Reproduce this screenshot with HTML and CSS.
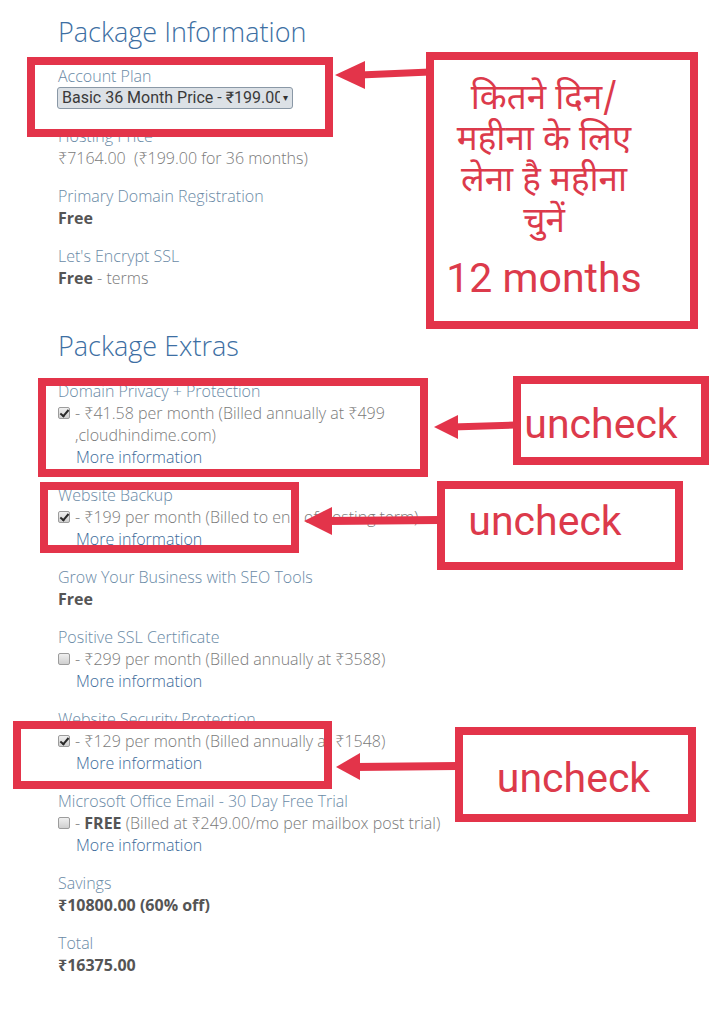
FILE: index.html
```html
<!DOCTYPE html>
<html lang="en">
<head>
<meta charset="utf-8">
<title>Package Information</title>
<link rel="stylesheet" href="styles.css">
</head>
<body>
<div class="page">
  <main class="content">
    <h2 class="heading">Package Information</h2>
    <div class="group">
      <div class="label">Account Plan</div>
      <div class="select"><span class="select-text">Basic 36 Month Price - ₹199.00 / month</span><span class="select-arrow">▾</span></div>
    </div>
    <div class="group">
      <div class="label">Hosting Price</div>
      <div class="value">₹7164.00&nbsp; (₹199.00 for 36 months)</div>
    </div>
    <div class="group">
      <div class="label">Primary Domain Registration</div>
      <div class="value"><b>Free</b></div>
    </div>
    <div class="group">
      <div class="label">Let's Encrypt SSL</div>
      <div class="value"><b>Free</b> - terms</div>
    </div>

    <h2 class="heading heading-extras">Package Extras</h2>
    <div class="group">
      <div class="label">Domain Privacy + Protection</div>
      <div class="option"><span class="cb checked"></span><span class="opt-text">- ₹41.58 per month (Billed annually at ₹499<br>,cloudhindime.com)<br><a class="link">More information</a></span></div>
    </div>
    <div class="group">
      <div class="label">Website Backup</div>
      <div class="option"><span class="cb checked"></span><span class="opt-text">- ₹199 per month (Billed to end of hosting term)<br><a class="link">More information</a></span></div>
    </div>
    <div class="group">
      <div class="label">Grow Your Business with SEO Tools</div>
      <div class="value"><b>Free</b></div>
    </div>
    <div class="group">
      <div class="label">Positive SSL Certificate</div>
      <div class="option"><span class="cb"></span><span class="opt-text">- ₹299 per month (Billed annually at ₹3588)<br><a class="link">More information</a></span></div>
    </div>
    <div class="group">
      <div class="label">Website Security Protection</div>
      <div class="option"><span class="cb checked"></span><span class="opt-text">- ₹129 per month (Billed annually at ₹1548)<br><a class="link">More information</a></span></div>
    </div>
    <div class="group">
      <div class="label">Microsoft Office Email - 30 Day Free Trial</div>
      <div class="option"><span class="cb"></span><span class="opt-text">- <b>FREE</b> (Billed at ₹249.00/mo per mailbox post trial)<br><a class="link">More information</a></span></div>
    </div>
    <div class="group">
      <div class="label">Savings</div>
      <div class="value"><b>₹10800.00 (60% off)</b></div>
    </div>
    <div class="group">
      <div class="label">Total</div>
      <div class="value"><b>₹16375.00</b></div>
    </div>
  </main>

  <div class="mark mark-plan"></div>
  <div class="mark mark-privacy"></div>
  <div class="mark mark-backup"></div>
  <div class="mark mark-security"></div>

  <div class="callout callout-plan">
    <div class="hi">कितने दिन/</div>
    <div class="hi">महीना के लिए</div>
    <div class="hi">लेना है महीना</div>
    <div class="hi">चुनें</div>
    <div class="en">12 months</div>
  </div>
  <div class="callout callout-a"><span class="unc">uncheck</span></div>
  <div class="callout callout-b"><span class="unc">uncheck</span></div>
  <div class="callout callout-c"><span class="unc">uncheck</span></div>

  <svg class="arrows" width="719" height="1010" viewBox="0 0 719 1010">
    <g fill="#e3344a" stroke="#e3344a">
      <line x1="360" y1="75" x2="430" y2="72" stroke-width="7"/>
      <polygon points="335,75 365,61 365,89" stroke="none"/>
      <line x1="452" y1="427" x2="515" y2="425" stroke-width="7"/>
      <polygon points="434,427 458,415 458,439" stroke="none"/>
      <line x1="328" y1="521" x2="439" y2="520" stroke-width="8"/>
      <polygon points="304,521 332,507 332,535" stroke="none"/>
      <line x1="355" y1="767" x2="457" y2="766" stroke-width="8"/>
      <polygon points="336,767 360,753 360,780" stroke="none"/>
    </g>
  </svg>
</div>
</body>
</html>
```
FILE: styles.css
```css
html, body {
  margin: 0;
  padding: 0;
  background: #ffffff;
}

.page {
  position: relative;
  width: 719px;
  min-height: 1010px;
  overflow: hidden;
}

.content {
  padding: 14px 0 0 58px;
  font-family: "Open Sans", "Noto Sans", sans-serif;
  font-weight: 300;
  font-size: 16px;
  line-height: 22px;
  color: #7a7a7a;
}

.heading {
  margin: 0 0 15px 0;
  font-family: "Open Sans", sans-serif;
  font-weight: 300;
  font-size: 27px;
  line-height: 36px;
  color: #3d6fa3;
}

.heading-extras {
  margin-top: 39px;
  margin-bottom: 16px;
}

.group {
  margin-bottom: 16px;
}

.label {
  color: #6a8aa6;
}

.value b,
.opt-text b {
  font-weight: 700;
  color: #555555;
}

.select {
  display: flex;
  align-items: center;
  box-sizing: border-box;
  width: 236px;
  height: 22px;
  margin-left: -1px;
  padding: 0 4px 0 4px;
  border: 1px solid #8a98a6;
  border-radius: 3px;
  background: #dce1e6;
  font-family: Roboto, "Noto Sans", sans-serif;
  font-weight: 400;
  font-size: 16px;
  color: #3a3a3a;
}

.select-text {
  flex: 1;
  white-space: nowrap;
  overflow: hidden;
}

.select-arrow {
  font-size: 10px;
  line-height: 10px;
  margin-left: 3px;
  color: #333;
}

.option {
  display: flex;
  align-items: flex-start;
}

.cb {
  flex: none;
  box-sizing: border-box;
  width: 12px;
  height: 12px;
  margin: 5px 5px 0 0;
  border: 1px solid #9c9c9c;
  border-radius: 2px;
  background: linear-gradient(#f0f0f0, #cfcfcf);
  position: relative;
}

.cb.checked::after {
  content: "";
  position: absolute;
  left: 3px;
  top: 0px;
  width: 3px;
  height: 7px;
  border: solid #2a2a2a;
  border-width: 0 2px 2px 0;
  transform: rotate(40deg);
}

.opt-text {
  display: block;
}

.link {
  display: inline-block;
  margin-left: 1px;
  color: #3b6a9a;
  text-decoration: none;
}

/* annotation overlay */
.mark {
  position: absolute;
  box-sizing: border-box;
  border: 8px solid #e3344a;
}

.mark-plan { left: 27px; top: 57px; width: 306px; height: 80px; }
.mark-privacy { left: 38px; top: 378px; width: 390px; height: 99px; }
.mark-backup { left: 40px; top: 482px; width: 259px; height: 71px; }
.mark-security { left: 13px; top: 721px; width: 319px; height: 68px; }

.callout {
  position: absolute;
  box-sizing: border-box;
  border: 8px solid #e3344a;
  background: #ffffff;
  color: #dc3a4b;
  font-family: Roboto, "Noto Sans", sans-serif;
  display: flex;
  flex-direction: column;
  align-items: center;
  justify-content: center;
}

.callout-plan {
  left: 426px;
  top: 52px;
  width: 272px;
  height: 277px;
  justify-content: flex-start;
  padding-top: 20px;
  padding-right: 36px;
}

.hi {
  font-family: "Noto Sans Devanagari", "Lohit Devanagari", "Noto Sans", sans-serif;
  font-size: 35px;
  line-height: 41px;
  white-space: nowrap;
}

.en {
  margin-top: 10px;
  font-size: 41px;
  line-height: 48px;
}

.unc {
  font-size: 41px;
  line-height: 48px;
}

.callout-a { left: 513px; top: 376px; width: 196px; height: 89px; padding: 6px 20px 0 0; }
.callout-b { left: 437px; top: 481px; width: 246px; height: 89px; padding: 0 30px 10px 0; }
.callout-c { left: 455px; top: 727px; width: 241px; height: 95px; padding: 6px 4px 0 0; }

.arrows {
  position: absolute;
  left: 0;
  top: 0;
  pointer-events: none;
}
```
